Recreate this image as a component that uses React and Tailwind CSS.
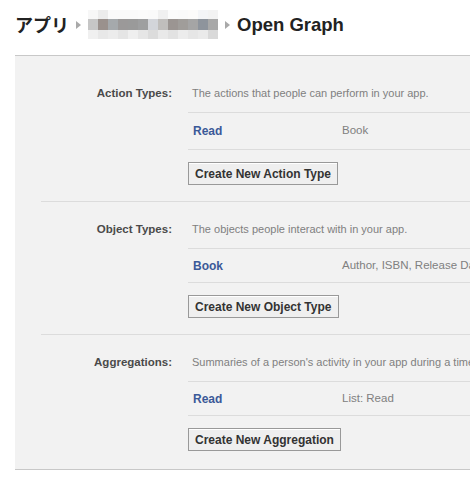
import React from 'react';

const font = { fontFamily: '"Liberation Sans", Arial, sans-serif' };

// blurred app name in the breadcrumb (pixelated block)
const blurRows = [
  ['#f7f7f7', '#ececec', '#fafafa', '#fafafa', '#fafafa', '#fbfbfb', '#fafafa', '#f0f0f0', '#fbfbfb', '#fafafa', '#fcfbfa', '#f4f5f7', '#f3f3f3'],
  ['#c6c6c6', '#9a918d', '#a5a9ac', '#9b9999', '#9a9a9a', '#9e9fa0', '#d3d5da', '#c0bebc', '#9b9592', '#a09d9a', '#a5a5a5', '#8e949c', '#a8a8a8'],
  ['#f0f0f0', '#e8e8e8', '#ececec', '#e5e5e5', '#efefef', '#e6e6e6', '#dcdcdc', '#e9e9e9', '#e2e2e2', '#ececec', '#e6e6e6', '#eaeaea', '#d9d9d9'],
];

const Arrow = () => (
  <svg width="5" height="8" viewBox="0 0 5 8" className="mx-[7px]">
    <path d="M0 0 L5 4 L0 8 Z" fill="#a9a9a9" />
  </svg>
);

const sections = [
  {
    label: 'Action Types:',
    desc: 'The actions that people can perform in your app.',
    name: 'Read',
    detail: 'Book',
    button: 'Create New Action Type',
    rowH: 'h-[37px]',
  },
  {
    label: 'Object Types:',
    desc: 'The objects people interact with in your app.',
    name: 'Book',
    detail: 'Author, ISBN, Release Date',
    button: 'Create New Object Type',
    rowH: 'h-[34px]',
  },
  {
    label: 'Aggregations:',
    desc: "Summaries of a person's activity in your app during a time period.",
    name: 'Read',
    detail: 'List: Read',
    button: 'Create New Aggregation',
    rowH: 'h-[34px]',
  },
];

const Section = ({ s, first, last }) => (
  <div className={first ? 'ml-[26px]' : 'ml-[26px] border-t border-[#dcdcdc]'}>
    <div className={`flex ${first ? 'pt-[30px]' : 'pt-[20px]'} ${last ? 'pb-[18px]' : 'pb-[16px]'}`}>
      <div className="w-[131px] shrink-0 text-right text-[11.5px] leading-[14px] font-bold text-[#4a4a4a]">
        {s.label}
      </div>
      <div className="ml-[16px] flex-1 min-w-0">
        <div className="px-[4px] pb-[12px] border-b border-[#dcdcdc] text-[11px] leading-[14px] text-[#808080] whitespace-nowrap">
          {s.desc}
        </div>
        <div className={`flex items-center ${s.rowH} border-b border-[#dcdcdc] text-[11px] whitespace-nowrap`}>
          <span className="w-[154px] pl-[5px] text-[12px] font-bold text-[#3b5998]">{s.name}</span>
          <span className="text-[11.5px] text-[#808080]">{s.detail}</span>
        </div>
        <button className="mt-[12px] h-[23px] px-[6px] border border-[#999] bg-[#efefef] shadow-[inset_0_1px_0_#fff] text-[12px] font-bold text-[#333] whitespace-nowrap" style={font}>
          {s.button}
        </button>
      </div>
    </div>
  </div>
);

export default function App() {
  return (
    <div className="w-[470px] h-[484px] overflow-hidden bg-white" style={font}>
      <div className="h-[55px] pl-[15px] flex items-center pb-[6px] whitespace-nowrap">
        <span
          className="text-[18px] font-bold text-[#222]"
          style={{ fontFamily: '"Noto Sans CJK JP", sans-serif' }}
        >
          アプリ
        </span>
        <Arrow />
        <div className="flex flex-col">
          {blurRows.map((row, i) => (
            <div key={i} className={`flex ${i === 1 ? 'h-[11px]' : 'h-[9px]'}`}>
              {row.map((c, j) => (
                <div key={j} className="w-[10px] h-full" style={{ backgroundColor: c }} />
              ))}
            </div>
          ))}
        </div>
        <Arrow />
        <span className="text-[18.5px] font-bold text-[#222]">Open Graph</span>
      </div>
      <div className="ml-[15px] w-[600px] bg-[#f2f2f2] border-t border-b border-[#c8c8c8]">
        {sections.map((s, i) => (
          <Section key={i} s={s} first={i === 0} last={i === sections.length - 1} />
        ))}
      </div>
    </div>
  );
}
